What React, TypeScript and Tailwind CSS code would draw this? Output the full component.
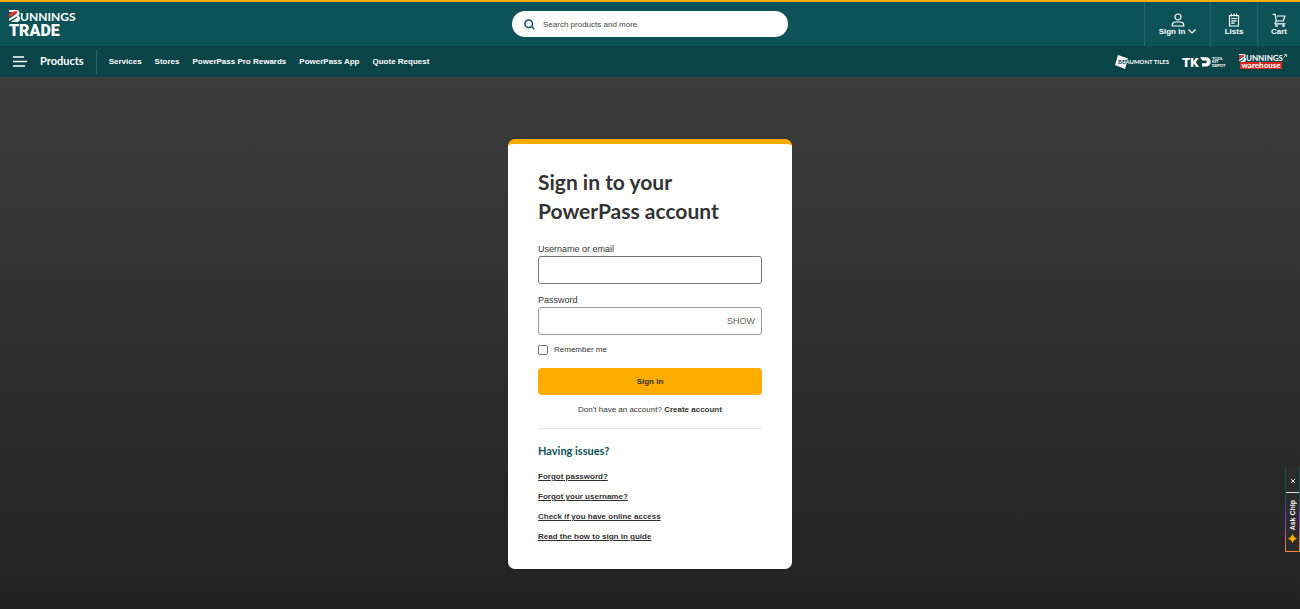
import { useState } from 'react';
import type { ReactNode } from 'react';

const navLinks = ['Services', 'Stores', 'PowerPass Pro Rewards', 'PowerPass App', 'Quote Request'];

const helpLinks = [
  'Forgot password?',
  'Forgot your username?',
  'Check if you have online access',
  'Read the how to sign in guide',
];

const BunningsMark = ({ className }: { className: string }) => (
  <svg viewBox="0 0 12 12" className={className} preserveAspectRatio="none" aria-hidden="true">
    <path d="M4 0h4q3.500 0 3.500 3 0 2-1.500 2.700Q12 6.300 12 8.500 12 12 8 12H2L9 7.500 8.500 6.500 0 11V9L8.500 3.500V2H0V0z" fill="#fff" />
    <path d="M0 7.500V4L6 1h3v1.500z" fill="#f03a2e" />
  </svg>
);

const TradeLogo = () => (
  <a href="#" className="flex flex-col pl-[9px] text-white">
    <span className="flex items-center font-[Lato,sans-serif] text-[12px] font-bold leading-[13px]">
      <BunningsMark className="h-3 w-[11px]" />
      UNNINGS
    </span>
    <span className="font-[Roboto,sans-serif] text-[16px] font-black leading-[16px]">TRADE</span>
  </a>
);

interface HeaderActionProps {
  label: ReactNode;
  className: string;
  children: ReactNode;
}

const HeaderAction = ({ label, className, children }: HeaderActionProps) => (
  <button
    type="button"
    className={`flex h-11 cursor-pointer flex-col items-center justify-center border-l border-[#246468] pt-px text-[8px] font-bold leading-[10px] ${className}`}
  >
    <svg
      viewBox="0 0 14 14"
      className="h-3.5 w-3.5"
      fill="none"
      stroke="currentColor"
      strokeWidth="1.2"
      strokeLinecap="round"
      strokeLinejoin="round"
      aria-hidden="true"
    >
      {children}
    </svg>
    <span className="flex items-center gap-[3px]">{label}</span>
  </button>
);

const Header = () => (
  <header className="border-t-2 border-[#ffac00] bg-[#0d5257] text-white">
    <div className="grid h-11 grid-cols-[1fr_276px_1fr] items-center">
      <TradeLogo />
      <label className="flex h-[26px] items-center gap-2 rounded-full bg-white px-3">
        <svg viewBox="0 0 11 11" className="h-[11px] w-[11px]" fill="none" stroke="#0d5257" strokeWidth="1.5" aria-hidden="true">
          <circle cx="4.700" cy="4.700" r="3.800" />
          <path d="M7.500 7.500L10.300 10.300" />
        </svg>
        <input
          type="search"
          aria-label="Search"
          placeholder="Search products and more"
          className="h-full flex-1 bg-transparent pt-px text-[8px] text-[#333] outline-none placeholder:text-[#444]"
        />
      </label>
      <div className="flex justify-end">
        <HeaderAction
          className="w-[66px]"
          label={
            <>
              Sign in
              <svg viewBox="0 0 8 5" className="h-[5px] w-2" fill="none" stroke="currentColor" strokeWidth="1.2" aria-hidden="true">
                <path d="M.5.5L4 4 7.500.5" />
              </svg>
            </>
          }
        >
          <circle cx="7" cy="4" r="3" />
          <path d="M1.200 13q-.2-4 3.500-4h4.600q3.700 0 3.500 4z" />
        </HeaderAction>
        <HeaderAction className="w-[47px]" label="Lists">
          <path d="M2.500 2.500h9v10.500h-9zM4.500 1v2M7 1v2M9.500 1v2M4.700 5.500h4.600M4.700 7.800h4.600M4.700 10.200h2.500" />
        </HeaderAction>
        <HeaderAction className="w-[43px]" label="Cart">
          <path d="M1 1.300h2.200L4.200 8h7L13 3H5.500M4.200 8L3 10.800h10" />
          <circle cx="4.500" cy="12.800" r=".6" />
          <circle cx="11.500" cy="12.800" r=".6" />
        </HeaderAction>
      </div>
    </div>
  </header>
);

const PartnerLogos = () => (
  <div className="flex items-center gap-[13px] pr-[13px] font-[Lato,sans-serif] text-white">
    <a href="#" aria-label="Beaumont Tiles">
      <svg viewBox="0 0 54 16" className="h-4 w-[54px] overflow-visible">
        <path d="M3 1L13 4.500 12 6H10.500V10H11.500L10 15 0 11z" fill="#fff" />
        <text x="3" y="10" fontSize="6" fontWeight="700" fill="#fff">
          <tspan fill="#0b4448">BE</tspan>AUMONT TILES
        </text>
      </svg>
    </a>
    <a href="#" aria-label="Tool Kit Depot">
      <svg viewBox="0 0 44 12" className="h-3 w-11 overflow-visible" fill="#fff">
        <text x="0" y="10.500" fontSize="13" fontWeight="900" className="font-[Roboto,sans-serif]">TK</text>
        <path d="M18 1.200H24a4.700 4.700 0 010 9.400h-4V7.200H23.500a1.400 1.400 0 000-2.800h-3z" />
        <g fontSize="4" fontWeight="900">
          <text x="30" y="3.500">TOOL</text>
          <text x="30" y="7">KIT</text>
          <text x="30" y="10.500">DEPOT</text>
        </g>
      </svg>
    </a>
    <a href="#" aria-label="Bunnings Warehouse" className="flex items-start">
      <span className="flex flex-col items-center">
        <span className="flex items-center text-[8px] font-bold leading-[8px]">
          <BunningsMark className="h-2 w-[7px]" />
          UNNINGS
        </span>
        <span className="w-[42px] bg-[#da291c] text-center text-[8px] font-black leading-[7px]">warehouse</span>
      </span>
      <svg viewBox="0 0 4 4" className="h-1 w-1" fill="none" stroke="#fff" strokeWidth=".7" aria-hidden="true">
        <path d="M.5 3.500l3-3M1 .5h2.500V3" />
      </svg>
    </a>
  </div>
);

const NavBar = () => (
  <nav className="flex h-[31px] items-center justify-between bg-[#0b4448] text-white">
    <div className="flex items-center">
      <button type="button" className="flex h-6 cursor-pointer items-center gap-[13px] border-r border-[#246468] pl-[13px] pr-3 font-[Lato,sans-serif] text-[11px] font-bold">
        <svg viewBox="0 0 14 11" className="h-[11px] w-3.5" stroke="currentColor" strokeWidth="1.600" aria-hidden="true">
          <path d="M0 1h11M0 5.500h14M0 10h12" />
        </svg>
        Products
      </button>
      <ul className="flex gap-[13px] pl-3 text-[8px] font-bold">
        {navLinks.map((link) => (
          <li key={link}>
            <a href="#">{link}</a>
          </li>
        ))}
      </ul>
    </div>
    <PartnerLogos />
  </nav>
);

const SignInCard = () => {
  const [showPassword, setShowPassword] = useState(false);

  return (
    <section className="w-[284px] rounded-[7px] border-t-[5px] border-[#ffac00] bg-white px-[30px] pb-[26px] pt-[23px] text-[#333]">
      <h1 className="font-[Lato,sans-serif] text-[21px] font-bold leading-[29px]">
        Sign in to your
        <br />
        PowerPass account
      </h1>
      <form className="mt-[17px]" onSubmit={(e) => e.preventDefault()}>
        <label htmlFor="username" className="block text-[9px] leading-[14px]">
          Username or email
        </label>
        <input id="username" type="text" className="block h-7 w-full rounded-[3px] border border-[#777] px-2 text-[9px]" />
        <label htmlFor="password" className="mt-[9px] block text-[9px] leading-[14px]">
          Password
        </label>
        <div className="flex h-7 rounded-[3px] border border-[#999]">
          <input id="password" type={showPassword ? 'text' : 'password'} className="min-w-0 flex-1 px-2 text-[9px] outline-none" />
          <button
            type="button"
            onClick={() => setShowPassword(!showPassword)}
            className="cursor-pointer px-1.5 pt-px text-[9px] text-[#666]"
          >
            {showPassword ? 'HIDE' : 'SHOW'}
          </button>
        </div>
        <label className="mt-[9px] flex h-3 items-center gap-1.5 text-[8px]">
          <input type="checkbox" className="h-[10px] w-[10px] appearance-none rounded-[2px] border border-[#777] checked:bg-[#0d5257]" />
          Remember me
        </label>
        <button type="submit" className="mt-3 h-[27px] w-full cursor-pointer rounded-[4px] bg-[#ffac00] text-[8px] font-bold">
          Sign in
        </button>
      </form>
      <p className="mt-[9px] border-b border-[#e4e4e4] pb-3 text-center text-[8px] leading-[12px]">
        Don't have an account?{' '}
        <a href="#" className="font-bold">
          Create account
        </a>
      </p>
      <h2 className="mt-[14px] font-[Lato,sans-serif] text-[11px] font-bold leading-[16px] text-[#0d5257]">Having issues?</h2>
      <ul className="mt-3 flex flex-col gap-2 text-[8px] font-bold leading-[12px]">
        {helpLinks.map((link) => (
          <li key={link}>
            <a href="#" className="underline underline-offset-1">
              {link}
            </a>
          </li>
        ))}
      </ul>
    </section>
  );
};

const ChatTab = () => (
  <aside className="fixed bottom-[57px] right-0 w-[15px] bg-[linear-gradient(#0d5257_0%,#0d5257_35%,#7a35d8_60%,#f7853b_100%)] px-px pb-px text-white">
    <div className="flex flex-col items-center bg-[#2b2b2b]">
      <button type="button" aria-label="Close chat" className="flex h-[26px] w-full cursor-pointer items-center justify-center border-b border-[#ddd] pt-0.5">
        <svg viewBox="0 0 4 4" className="h-1 w-1" stroke="currentColor" strokeWidth=".9" aria-hidden="true">
          <path d="M0 0l4 4M4 0L0 4" />
        </svg>
      </button>
      <button type="button" className="flex h-[58px] w-full cursor-pointer flex-col items-center justify-end gap-1 pb-2 text-[7px] font-bold leading-[9px]">
        <span className="rotate-180 [writing-mode:vertical-rl]">Ask Chip</span>
        <svg viewBox="0 0 8 8" className="h-[9px] w-[9px]" fill="#ffac00" aria-hidden="true">
          <path d="M4 0q.9 3.100 4 4-3.100.9-4 4-.9-3.100-4-4 3.100-.9 4-4z" />
        </svg>
      </button>
    </div>
  </aside>
);

export default function App() {
  return (
    <div className="flex min-h-screen flex-col font-['Liberation_Sans',Arial,sans-serif]">
      <Header />
      <NavBar />
      <main className="flex flex-1 items-start justify-center bg-linear-to-b from-[#3c3c3c] to-[#222] pb-10 pt-[62px]">
        <SignInCard />
      </main>
      <ChatTab />
    </div>
  );
}
